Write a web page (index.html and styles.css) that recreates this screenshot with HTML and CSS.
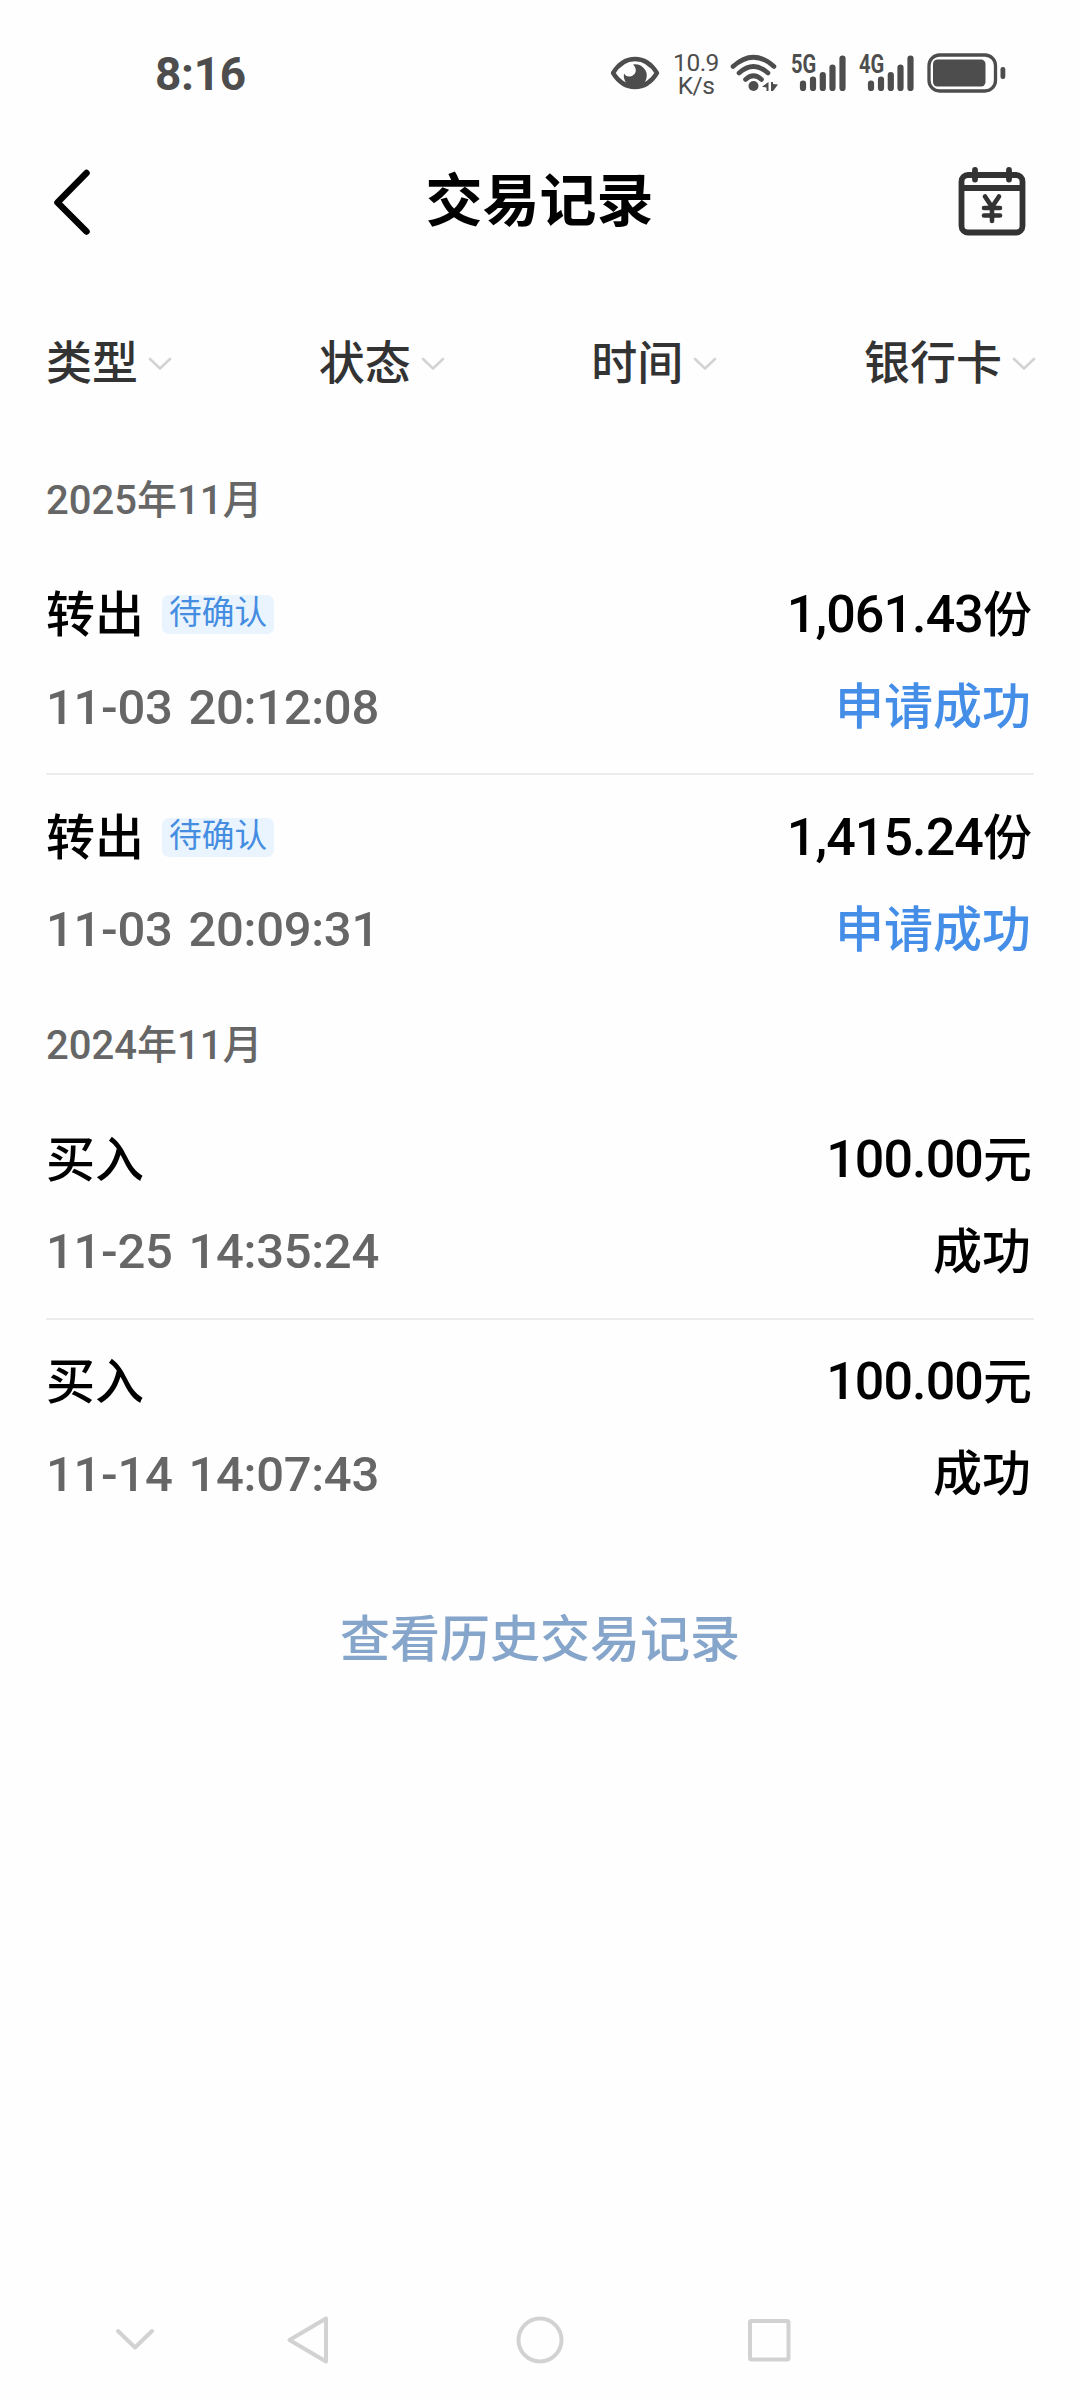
FILE: index.html
```html
<!DOCTYPE html>
<html lang="zh-CN">
<head>
<meta charset="utf-8">
<title>交易记录</title>
<link rel="stylesheet" href="styles.css">
</head>
<body>
<div class="screen">
  <div class="status-bar">
    <span class="clock">8:16</span>
    <div class="status-icons">
      <svg class="icon-eye" width="50" height="34" viewBox="0 0 50 34"><path d="M3 17C8 9 16 3 25 3s17 6 22 14C42 25 34 31 25 31S8 25 3 17Z" fill="none" stroke="#4d4d4d" stroke-width="4.300" stroke-linejoin="round"/><path d="M23 8.500A11.500 11.500 0 1 1 14 17.500Q16 21 20 20.500C26 19.500 28 13 23 8.500Z" fill="#4d4d4d"/></svg>
      <span class="net-speed"><span>10.9</span><span>K/s</span></span>
      <svg class="icon-wifi" width="48" height="38" viewBox="0 0 48 38"><g fill="none" stroke="#4d4d4d" stroke-width="4.600" stroke-linecap="round"><path d="M3 12.500Q23.500-6 44 12.500"/><path d="M9 19Q23.500 6 38 19"/><path d="M15.500 25.500Q23.500 18 31.500 25.500"/></g><circle cx="23.500" cy="32" r="5" fill="#4d4d4d"/><path d="M38.500 28v9h-2v-3.500L32 32.800ZM41 28h2v2l5 .5-5 6.500h-2Z" fill="#4d4d4d"/></svg>
      <span class="signal"><span class="signal-label">5G</span><svg width="47" height="37" viewBox="0 0 47 37"><g stroke="#4d4d4d" stroke-width="6.200" stroke-linecap="round"><path d="M4 28.500v4.500M14 24.500v8.500M23.800 20v13M33.500 12.500v20.500M43.500 3.500v29.500"/></g></svg></span>
      <span class="signal"><span class="signal-label">4G</span><svg width="47" height="37" viewBox="0 0 47 37"><g stroke="#4d4d4d" stroke-width="6.200" stroke-linecap="round"><path d="M4 28.500v4.500M14 24.500v8.500M23.800 20v13M33.500 12.500v20.500M43.500 3.500v29.500"/></g></svg></span>
      <svg class="icon-battery" width="79" height="40" viewBox="0 0 79 40"><rect x="2" y="2" width="66.500" height="36" rx="10.500" fill="none" stroke="#4d4d4d" stroke-width="3.300"/><rect x="6" y="6.500" width="52.500" height="27" rx="4.500" fill="#4d4d4d"/><rect x="73.500" y="14" width="4.800" height="12" rx="2.200" fill="#4d4d4d"/></svg>
    </div>
  </div>

  <header class="header">
    <svg width="40" height="70" viewBox="0 0 40 70"><path d="M34.500 6 5.500 35.500 34.500 64.500" fill="none" stroke="#000" stroke-width="6.500" stroke-linecap="round" stroke-linejoin="round"/></svg>
    <h1 class="title">交易记录</h1>
    <svg width="68" height="70" viewBox="0 0 68 70"><g fill="none" stroke="#333" stroke-width="5.800"><rect x="3.500" y="8" width="61" height="57.500" rx="6.500"/><path d="M3.500 21h61"/><path d="M17 3v9.500M51 3v9.500" stroke-linecap="round"/><path d="M27 29.500l7 10.500 7-10.500M34 40v14M26 41h16M26 48.500h16" stroke-width="4.600" stroke-linecap="round"/></g></svg>
  </header>

  <nav class="filters">
    <span class="filter">类型<svg width="24" height="14" viewBox="0 0 24 14"><path d="M2 2l10 9.500L22 2"/></svg></span>
    <span class="filter">状态<svg width="24" height="14" viewBox="0 0 24 14"><path d="M2 2l10 9.500L22 2"/></svg></span>
    <span class="filter">时间<svg width="24" height="14" viewBox="0 0 24 14"><path d="M2 2l10 9.500L22 2"/></svg></span>
    <span class="filter">银行卡<svg width="24" height="14" viewBox="0 0 24 14"><path d="M2 2l10 9.500L22 2"/></svg></span>
  </nav>

  <main class="records">
    <section class="month">
      <h2 class="month-title">2025年11月</h2>
      <article class="record">
        <div class="line"><span class="kind">转出</span><span class="tag">待确认</span><span class="amount">1,061.43<span class="unit">份</span></span></div>
        <div class="line"><span class="time">11-03 20:12:08</span><span class="state pending">申请成功</span></div>
      </article>
      <article class="record">
        <div class="line"><span class="kind">转出</span><span class="tag">待确认</span><span class="amount">1,415.24<span class="unit">份</span></span></div>
        <div class="line"><span class="time">11-03 20:09:31</span><span class="state pending">申请成功</span></div>
      </article>
    </section>
    <section class="month">
      <h2 class="month-title">2024年11月</h2>
      <article class="record">
        <div class="line"><span class="kind">买入</span><span class="amount">100.00<span class="unit">元</span></span></div>
        <div class="line"><span class="time">11-25 14:35:24</span><span class="state">成功</span></div>
      </article>
      <article class="record">
        <div class="line"><span class="kind">买入</span><span class="amount">100.00<span class="unit">元</span></span></div>
        <div class="line"><span class="time">11-14 14:07:43</span><span class="state">成功</span></div>
      </article>
    </section>
  </main>

  <a class="history">查看历史交易记录</a>

  <footer class="nav-bar">
    <svg class="nav-hide" width="40" height="24" viewBox="0 0 40 24"><path d="M3 3l17 16.500L37 3"/></svg>
    <svg class="nav-back" width="44" height="50" viewBox="0 0 44 50"><path d="M40 3.500v43L3.500 25Z"/></svg>
    <svg class="nav-home" width="50" height="50" viewBox="0 0 50 50"><circle cx="25" cy="25" r="21.500"/></svg>
    <svg class="nav-recent" width="44" height="44" viewBox="0 0 44 44"><rect x="3" y="3" width="38.500" height="38.500" rx="1.500"/></svg>
  </footer>
</div>
</body>
</html>
```
FILE: styles.css
```css
* { box-sizing: border-box; }

body {
  margin: 0;
  background: #fefefe;
  color: #000;
  font-family: Roboto, "Noto Sans CJK SC", sans-serif;
  font-weight: 500;
}

svg { display: block; flex: none; }

.screen {
  width: 1080px;
  height: 2400px;
  display: flex;
  flex-direction: column;
}

/* System status bar */
.status-bar {
  height: 146px;
  padding: 0 74px 0 155px;
  display: flex;
  align-items: center;
  justify-content: space-between;
  color: #4d4d4d;
}

.clock { font-size: 46px; font-weight: 700; letter-spacing: -0.3px; padding-top: 2px; }
.status-icons { display: flex; align-items: center; }

.net-speed {
  width: 46px;
  margin: 0 11px 0 13px;
  padding-top: 2px;
  display: flex;
  flex-direction: column;
  align-items: center;
  font-size: 24.5px;
  font-weight: 400;
  line-height: 23px;
  letter-spacing: -0.5px;
}

.signal { position: relative; margin-left: 21px; }
.signal-label {
  position: absolute;
  left: -8px;
  top: -1px;
  font-size: 25.5px;
  font-weight: 700;
  line-height: 20px;
  transform: scaleX(0.79);
  transform-origin: left;
}
.icon-battery { margin-left: 13px; }

/* Page header */
.header {
  height: 112px;
  padding: 0 54px 0 52px;
  display: flex;
  align-items: center;
  justify-content: space-between;
}
.title {
  margin: 0;
  font-size: 57px;
  font-weight: 700;
  line-height: 80px;
  padding-left: 29px;
}

/* Filters */
.filters {
  height: 202px;
  margin-bottom: 8px;
  padding: 0 44px 0 46px;
  display: flex;
  align-items: center;
  justify-content: space-between;
  color: #333;
}
.filter {
  display: flex;
  align-items: center;
  gap: 10px;
  font-size: 46px;
}
.filter svg { margin-top: 9px; }
.filter svg path {
  fill: none;
  stroke: #d3d3d3;
  stroke-width: 2.6;
  stroke-linecap: round;
}

/* Transaction list */
.records { padding: 0 46px; }
.month { height: 544.5px; }
.month-title {
  margin: 0;
  height: 96.5px;
  padding-top: 7px;
  color: #666;
  font-size: 40px;
  font-weight: 500;
  line-height: 52px;
}
.record { height: 208.5px; }
.record + .record {
  height: 238px;
  padding-top: 12px;
  border-top: 2px solid #ececec;
}
.line {
  height: 92px;
  display: flex;
  align-items: center;
}
.kind, .unit, .state { font-size: 49px; }
.tag {
  height: 39px;
  margin: 8px 0 0 18px;
  padding: 0 7px;
  border-radius: 7px;
  background: #eaf4fe;
  color: #458de1;
  font-size: 32.7px;
  font-weight: 400;
  line-height: 37px;
}
.amount {
  margin-left: auto;
  padding-right: 2px;
  font-size: 52px;
  letter-spacing: -0.9px;
}
.unit { letter-spacing: 0; }
.time {
  padding-top: 9px;
  color: #666;
  font-size: 49px;
  letter-spacing: -0.3px;
  word-spacing: 4px;
}
.state { margin-left: auto; padding-right: 3px; }
.pending { color: #448ee8; }

.history {
  margin-top: 47px;
  text-align: center;
  color: #86a5ca;
  font-size: 50px;
  line-height: 72px;
}

/* System navigation */
.nav-bar {
  height: 121px;
  margin-top: auto;
  padding-left: 115px;
  display: flex;
  align-items: center;
}
.nav-bar svg {
  fill: none;
  stroke: #d2d2d2;
  stroke-width: 4;
  stroke-linecap: round;
  stroke-linejoin: round;
}
.nav-back { margin-left: 131px; }
.nav-home { margin-left: 185px; }
.nav-recent { margin-left: 182px; }
```
